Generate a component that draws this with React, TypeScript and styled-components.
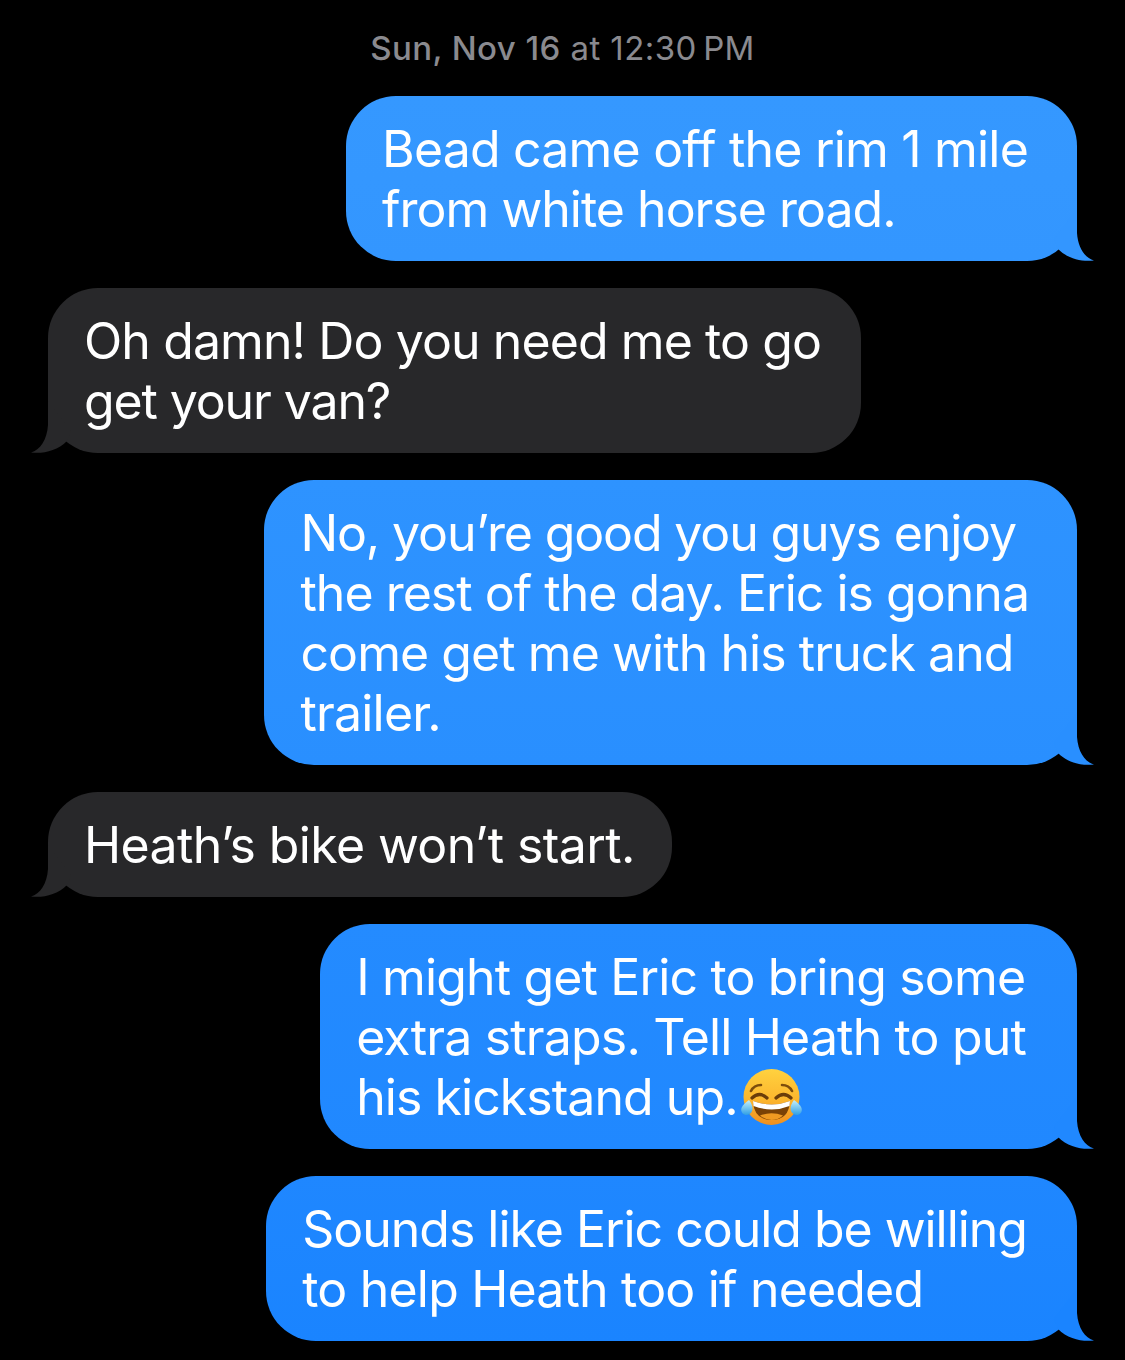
import React from "react";
import styled, { createGlobalStyle } from "styled-components";

const Global = createGlobalStyle`
  html, body { margin: 0; padding: 0; background: #000; }
`;

const Thread = styled.main`
  height: 1360px;
  box-sizing: border-box;
  overflow: hidden;
  background: #000;
  display: flex;
  flex-direction: column;
  gap: 27px;
  padding: 0 48px;
  font-family: Inter, "Liberation Sans", sans-serif;
  font-variant-ligatures: none;
`;

const Stamp = styled.div`
  height: 69px;
  flex: none;
  padding-top: 26px;
  box-sizing: border-box;
  text-align: center;
  font-size: 33px;
  line-height: 44px;
  letter-spacing: 0.42px;
  color: #8a8a8f;
`;

const StampDay = styled.span`
  font-weight: 500;
`;

const Bubble = styled.div<{
  $mine?: boolean;
  $top?: string;
  $bottom?: string;
  $left: number;
  $right: number;
}>`
  position: relative;
  flex: none;
  width: fit-content;
  align-self: ${(p) => (p.$mine ? "flex-end" : "flex-start")};
  padding: 22.5px ${(p) => p.$right}px 22.5px ${(p) => p.$left}px;
  border-radius: 50px;
  background: ${(p) =>
    p.$mine ? `linear-gradient(${p.$top}, ${p.$bottom})` : "#28282a"};
  color: #fff;
  font-size: 50px;
  line-height: 60px;
  white-space: nowrap;
`;

const Line = styled.span<{ $tracking: number }>`
  display: flex;
  align-items: center;
  letter-spacing: ${(p) => p.$tracking}px;
`;

const Tail = styled.svg<{ $mine?: boolean }>`
  position: absolute;
  bottom: 0;
  width: 40px;
  height: 52px;
  ${(p) => (p.$mine ? "right: -17px;" : "left: -17px; transform: scaleX(-1);")}
`;

const Emoji = styled.svg`
  width: 62px;
  height: 60px;
  flex: none;
  margin-left: 3px;
`;

const TailShape = ({ mine, fill }: { mine?: boolean; fill: string }) => (
  <Tail $mine={mine} viewBox="0 0 40 52" aria-hidden>
    <path
      d="M23 0 V24 C24 39 31 49 40 51.5 C28 53 14 50 4 40 L0 30 Z"
      fill={fill}
    />
  </Tail>
);

const LaughingEmoji = () => (
  <Emoji viewBox="0 0 62 60" aria-hidden>
    <defs>
      <linearGradient id="face" x1="0" y1="0" x2="0" y2="1">
        <stop offset="0" stopColor="#ffd23f" />
        <stop offset="0.55" stopColor="#fcb62e" />
        <stop offset="1" stopColor="#ef8f1f" />
      </linearGradient>
      <linearGradient id="tear" x1="0" y1="0" x2="0" y2="1">
        <stop offset="0" stopColor="#c4f0fb" />
        <stop offset="1" stopColor="#2f9fe6" />
      </linearGradient>
    </defs>
    <circle cx="30.5" cy="30" r="28" fill="url(#face)" />
    <path d="M12 34 Q31 41 49 34 Q48 53 30.5 53 Q13 53 12 34 Z" fill="#7a4206" />
    <path d="M12 34 Q31 41 49 34 L48.5 39 Q31 46 12.5 39 Z" fill="#fff" />
    <path d="M19 48.5 Q30.5 44 42 48.5 Q37 53 30.5 53 Q24 53 19 48.5 Z" fill="#ef9a22" />
    <path d="M11 31 Q18.5 24 26 31 M35 31 Q42.5 24 50 31" fill="none" stroke="#6b3d0a" strokeWidth="3.2" strokeLinecap="round" />
    <path d="M10 24 Q13 18 20 18 M41 18 Q48 18 51 24" fill="none" stroke="#7d4d0c" strokeWidth="2.6" strokeLinecap="round" />
    <path d="M8 33 C12 38 13 44 8.5 47 C4 50 -1 46 0.5 41 C1.5 38 5 35 8 33 Z" fill="url(#tear)" />
    <path d="M53 33 C49 38 48 44 52.5 47 C57 50 62 46 60.5 41 C59.5 38 56 35 53 33 Z" fill="url(#tear)" />
  </Emoji>
);

type Row = [string, number];
type Msg = {
  mine?: boolean;
  top?: string;
  bottom?: string;
  left: number;
  right: number;
  lines: Row[];
  emoji?: boolean;
};

const messages: Msg[] = [
  {
    mine: true,
    top: "#3598ff",
    bottom: "#3396ff",
    left: 36,
    right: 49,
    lines: [
      ["Bead came off the rim 1 mile", -0.81],
      ["from white horse road.", -1.0],
    ],
  },
  {
    left: 36,
    right: 40,
    lines: [
      ["Oh damn! Do you need me to go", -0.9],
      ["get your van?", -1.12],
    ],
  },
  {
    mine: true,
    top: "#2e93ff",
    bottom: "#298fff",
    left: 36,
    right: 48,
    lines: [
      ["No, you’re good you guys enjoy", -1.13],
      ["the rest of the day. Eric is gonna", -0.98],
      ["come get me with his truck and", -0.93],
      ["trailer.", -0.8],
    ],
  },
  { left: 36, right: 37, lines: [["Heath’s bike won’t start.", -0.6]] },
  {
    mine: true,
    top: "#248bff",
    bottom: "#2088ff",
    emoji: true,
    left: 36,
    right: 51,
    lines: [
      ["I might get Eric to bring some", -0.85],
      ["extra straps. Tell Heath to put", -0.84],
      ["his kickstand up.", -0.95],
    ],
  },
  {
    mine: true,
    top: "#1f87ff",
    bottom: "#1a84ff",
    left: 36,
    right: 50,
    lines: [
      ["Sounds like Eric could be willing", -1.03],
      ["to help Heath too if needed", -0.82],
    ],
  },
];

export default function App() {
  return (
    <Thread>
      <Global />
      <Stamp>
        <StampDay>Sun, Nov 16</StampDay> at 12:30{"\u202f"}PM
      </Stamp>
      {messages.map((m, i) => (
        <Bubble
          key={i}
          $mine={m.mine}
          $top={m.top}
          $bottom={m.bottom}
          $left={m.left}
          $right={m.right}
        >
          {m.lines.map(([text, tracking], j) => (
            <Line key={j} $tracking={tracking}>
              {text}
              {m.emoji && j === m.lines.length - 1 && <LaughingEmoji />}
            </Line>
          ))}
          <TailShape mine={m.mine} fill={m.mine ? m.bottom! : "#28282a"} />
        </Bubble>
      ))}
    </Thread>
  );
}
